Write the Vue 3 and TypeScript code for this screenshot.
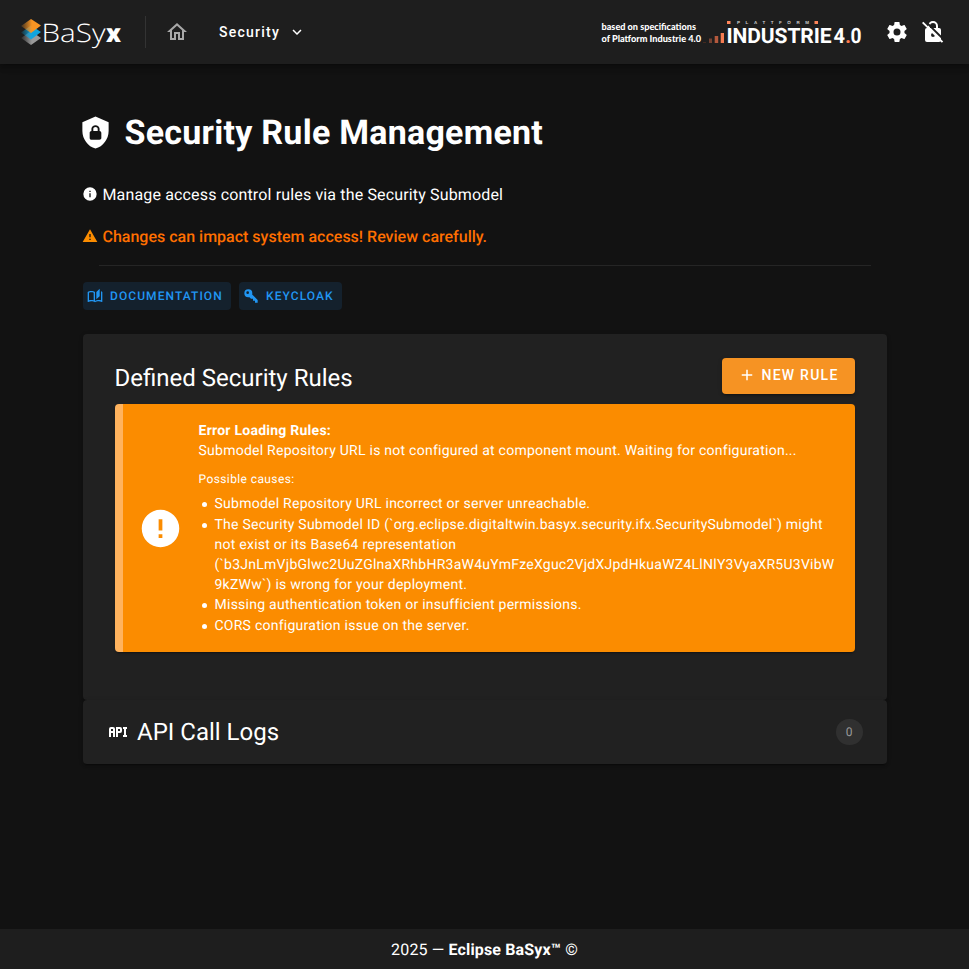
<script setup lang="ts">
interface Cause {
  text: string
}

const icons = {
  home: 'M12 5.69L17 10.19V18H15V12H9V18H7V10.19L12 5.69M12 3L2 12H5V20H11V14H13V20H19V12H22',
  chevron: 'M7.41,8.58L12,13.17L16.59,8.58L18,10L12,16L6,10L7.41,8.58Z',
  cog: 'M12,15.5A3.5,3.5 0 0,1 8.5,12A3.5,3.5 0 0,1 12,8.5A3.5,3.5 0 0,1 15.5,12A3.5,3.5 0 0,1 12,15.5M19.43,12.97C19.47,12.65 19.5,12.33 19.5,12C19.5,11.67 19.47,11.34 19.43,11L21.54,9.37C21.73,9.22 21.78,8.95 21.66,8.73L19.66,5.27C19.54,5.05 19.27,4.96 19.05,5.05L16.56,6.05C16.04,5.66 15.5,5.32 14.87,5.07L14.5,2.42C14.46,2.18 14.25,2 14,2H10C9.75,2 9.54,2.18 9.5,2.42L9.13,5.07C8.5,5.32 7.96,5.66 7.44,6.05L4.95,5.05C4.73,4.96 4.46,5.05 4.34,5.27L2.34,8.73C2.21,8.95 2.27,9.22 2.46,9.37L4.57,11C4.53,11.34 4.5,11.67 4.5,12C4.5,12.33 4.53,12.65 4.57,12.97L2.46,14.63C2.27,14.78 2.21,15.05 2.34,15.27L4.34,18.73C4.46,18.95 4.73,19.03 4.95,18.95L7.44,17.94C7.96,18.34 8.5,18.68 9.13,18.93L9.5,21.58C9.54,21.82 9.75,22 10,22H14C14.25,22 14.46,21.82 14.5,21.58L14.87,18.93C15.5,18.67 16.04,18.34 16.56,17.94L19.05,18.95C19.27,19.03 19.54,18.95 19.66,18.73L21.66,15.27C21.78,15.05 21.73,14.78 21.54,14.63L19.43,12.97Z',
  shield: 'M12,1L3,5V11C3,16.55 6.84,21.74 12,23C17.16,21.74 21,16.55 21,11V5L12,1M12,7C13.4,7 14.8,8.1 14.8,9.5V11C15.4,11 16,11.6 16,12.3V15.8C16,16.4 15.4,17 14.7,17H9.2C8.6,17 8,16.4 8,15.7V12.2C8,11.6 8.6,11 9.2,11V9.5C9.2,8.1 10.6,7 12,7M12,8.2C11.2,8.2 10.5,8.7 10.5,9.5V11H13.5V9.5C13.5,8.7 12.8,8.2 12,8.2Z',
  info: 'M13,9H11V7H13M13,17H11V11H13M12,2A10,10 0 0,0 2,12A10,10 0 0,0 12,22A10,10 0 0,0 22,12A10,10 0 0,0 12,2Z',
  alert: 'M13 14H11V9H13M13 18H11V16H13M1 21H23L12 2L1 21Z',
  book: 'M19 1L14 6V17L19 12.5V1M21 5V18.5C19.9 18.15 18.7 18 17.5 18C15.8 18 13.35 18.65 12 19.5V6C10.55 4.9 8.45 4.5 6.5 4.5C4.55 4.5 2.45 4.9 1 6V20.65C1 20.9 1.25 21.15 1.5 21.15C1.6 21.15 1.65 21.1 1.75 21.1C3.1 20.45 5.05 20 6.5 20C8.45 20 10.55 20.4 12 21.5C13.35 20.65 15.8 20 17.5 20C19.15 20 20.85 20.3 22.25 21.05C22.35 21.1 22.4 21.1 22.5 21.1C22.75 21.1 23 20.85 23 20.6V6C22.4 5.55 21.75 5.25 21 5M10 18.41C8.75 18.09 7.5 18 6.5 18C5.44 18 4.18 18.19 3 18.5V7.13C3.91 6.73 5.14 6.5 6.5 6.5C7.86 6.5 9.09 6.73 10 7.13V18.41Z',
  key: 'M22,18V22H18V19H15V16H12L9.74,13.74C9.19,13.91 8.61,14 8,14A6,6 0 0,1 2,8A6,6 0 0,1 8,2A6,6 0 0,1 14,8C14,8.61 13.91,9.19 13.74,9.74L22,18M7,5A2,2 0 0,0 5,7A2,2 0 0,0 7,9A2,2 0 0,0 9,7A2,2 0 0,0 7,5Z',
  plus: 'M19,13H13V19H11V13H5V11H11V5H13V11H19V13Z',
  alertCircle: 'M13,13H11V7H13M13,17H11V15H13M12,2A10,10 0 0,0 2,12A10,10 0 0,0 12,22A10,10 0 0,0 22,12A10,10 0 0,0 12,2Z',
  api: 'M7 7H5A2 2 0 0 0 3 9V17H5V13H7V17H9V9A2 2 0 0 0 7 7M7 11H5V9H7M14 7H10V17H12V13H14A2 2 0 0 0 16 11V9A2 2 0 0 0 14 7M14 11H12V9H14M20 9V15H21V17H17V15H18V9H17V7H21V9Z',
}

const causes: Cause[] = [
  { text: 'Submodel Repository URL incorrect or server unreachable.' },
  {
    text: 'The Security Submodel ID (`org.eclipse.digitaltwin.basyx.security.ifx.SecuritySubmodel`) might not exist or its Base64 representation (`b3JnLmVjbGlwc2UuZGlnaXRhbHR3aW4uYmFzeXguc2VjdXJpdHkuaWZ4LlNlY3VyaXR5U3VibW9kZWw`) is wrong for your deployment.',
  },
  { text: 'Missing authentication token or insufficient permissions.' },
  { text: 'CORS configuration issue on the server.' },
]
const logCount: number = 0
</script>

<template>
  <div class="app">
    <header class="bar">
      <svg class="logo" width="104" height="48" viewBox="0 0 104 48">
        <defs>
          <linearGradient id="lo" x1="0" x2="1"><stop offset="0" stop-color="#f79423" stop-opacity=".15" /><stop offset=".55" stop-color="#f79423" /></linearGradient>
          <linearGradient id="lb" x1="0" x2="1"><stop offset="0" stop-color="#10a5df" stop-opacity=".1" /><stop offset=".55" stop-color="#10a5df" /></linearGradient>
          <linearGradient id="lg" x1="0" x2="1"><stop offset="0" stop-color="#9a9a9a" stop-opacity=".1" /><stop offset=".55" stop-color="#9a9a9a" /></linearGradient>
        </defs>
        <path d="M0 30L10 23L20 30L10 37Z" fill="url(#lg)" />
        <path d="M0 24.500L10 17.500L20 24L10 31.500Z" fill="url(#lb)" />
        <path d="M0 18L10 11L20 17.500L10 25Z" fill="url(#lo)" />
        <text class="logo-thin" x="20.500" y="33.500" textLength="64" lengthAdjust="spacingAndGlyphs">BaSy</text>
        <text class="logo-bold" x="85" y="33.500" textLength="15" lengthAdjust="spacingAndGlyphs">x</text>
      </svg>
      <span class="bar-line"></span>
      <svg class="home" width="24" height="24" viewBox="0 0 24 24"><path :d="icons.home" /></svg>
      <button class="menu">Security<svg width="18" height="18" viewBox="0 0 24 24"><path :d="icons.chevron" /></svg></button>
      <div class="grow"></div>
      <svg class="platform" width="264" height="34" viewBox="0 0 264 34">
        <text class="spec" x="1.500" y="15" textLength="94.500" lengthAdjust="spacingAndGlyphs">based on specifications</text>
        <text class="spec" x="1.500" y="26.500" textLength="99.500" lengthAdjust="spacingAndGlyphs">of Platform Industrie 4.0</text>
        <rect x="103" y="27" width="3" height="1" fill="#44291f" />
        <rect x="109" y="23.500" width="3" height="4.500" fill="#754131" />
        <rect x="114.700" y="21" width="3.500" height="7" fill="#b4593d" />
        <rect x="120.700" y="18" width="3.300" height="10" fill="#f47c52" />
        <rect x="127" y="6" width="3.500" height="3" fill="#ff855a" />
        <text class="tiny" x="137" y="9" textLength="72" lengthAdjust="spacing">PLATTFORM</text>
        <rect x="214.500" y="6" width="3.500" height="3" fill="#ff855a" />
        <text class="industrie" x="126.500" y="28" textLength="105" lengthAdjust="spacing">INDUSTRIE</text>
        <text class="industrie" x="233.500" y="28" textLength="11.500" lengthAdjust="spacingAndGlyphs">4</text>
        <text class="industrie dot" x="245" y="28">.</text>
        <text class="industrie" x="250.500" y="28" textLength="11" lengthAdjust="spacingAndGlyphs">0</text>
      </svg>
      <svg class="cog" width="24" height="24" viewBox="0 0 24 24"><path :d="icons.cog" /></svg>
      <svg class="unlock" width="24" height="24" viewBox="0 0 24 24">
        <path fill-rule="evenodd" d="M6 8H15V6A3 3 0 0 0 9 6V8H7V6A5 5 0 0 1 17 6V8H18A2 2 0 0 1 20 10V20A2 2 0 0 1 18 22H6A2 2 0 0 1 4 20V10A2 2 0 0 1 6 8ZM12 13A2 2 0 1 0 12 17A2 2 0 1 0 12 13Z" />
        <path d="M3.600 .5L23.500 20.400" class="slash-gap" />
        <path d="M1.700 2.400L21.500 22.200" class="slash" />
      </svg>
    </header>

    <main>
      <h1><svg width="35" height="35" viewBox="0 0 24 24"><path :d="icons.shield" /></svg><span>Security Rule Management</span></h1>
      <p class="lead"><svg width="16" height="16" viewBox="0 0 24 24"><path :d="icons.info" /></svg>Manage access control rules via the Security Submodel</p>
      <p class="warning"><svg width="16" height="16" viewBox="0 0 24 24"><path :d="icons.alert" /></svg>Changes can impact system access! Review carefully.</p>
      <hr>
      <nav class="links">
        <a class="doc"><svg width="16" height="16" viewBox="0 0 24 24"><path :d="icons.book" /></svg>DOCUMENTATION</a>
        <a class="keycloak"><svg width="16" height="16" viewBox="0 0 24 24"><path :d="icons.key" /></svg>KEYCLOAK</a>
      </nav>

      <section class="card rules">
        <div class="card-head">
          <h2>Defined Security Rules</h2>
          <button class="new"><svg width="18" height="18" viewBox="0 0 24 24"><path :d="icons.plus" /></svg>NEW RULE</button>
        </div>
        <div class="alert">
          <svg class="alert-icon" width="45" height="45" viewBox="0 0 24 24"><path :d="icons.alertCircle" /></svg>
          <div class="alert-body">
            <strong>Error Loading Rules:</strong>
            <div>Submodel Repository URL is not configured at component mount. Waiting for configuration...</div>
            <div class="possible">Possible causes:</div>
            <ul>
              <li v-for="cause in causes" :key="cause.text">{{ cause.text }}</li>
            </ul>
          </div>
        </div>
      </section>

      <section class="card logs">
        <svg width="24" height="24" viewBox="0 0 24 24"><path :d="icons.api" /></svg>
        <h2>API Call Logs</h2>
        <span class="count">{{ logCount }}</span>
      </section>
    </main>

    <footer><span>2025 — <b>Eclipse BaSyx™</b> ©</span></footer>
  </div>
</template>

<style>
body {
  background: #121212;
}
</style>

<style scoped>
* {
  box-sizing: border-box;
}
.app {
  display: flex;
  flex-direction: column;
  height: 969px;
  overflow: hidden;
  background: #121212;
  color: #fff;
  font-family: Roboto, "Liberation Sans", sans-serif;
  line-height: 1.5;
  text-rendering: geometricPrecision;
}
svg {
  fill: currentColor;
  flex: none;
}
button {
  border: 0;
  color: inherit;
  font-family: inherit;
}
.bar {
  display: flex;
  align-items: center;
  flex: none;
  height: 64px;
  padding: 0 24px 0 21px;
  background: #1e1e1e;
  box-shadow: 0 2px 4px -1px rgba(0, 0, 0, 0.2), 0 4px 5px rgba(0, 0, 0, 0.14), 0 1px 10px rgba(0, 0, 0, 0.12);
}
.logo {
  overflow: visible;
}
.logo-thin {
  font: 300 25.500px "Open Sans", sans-serif;
}
.logo-bold {
  font: 800 25px "Open Sans", sans-serif;
}
.bar-line {
  width: 1px;
  height: 32px;
  margin: 0 19px 0 20px;
  background: #333;
}
.home {
  color: #a8a8a8;
}
.menu {
  display: flex;
  align-items: center;
  gap: 8px;
  margin-left: 30px;
  padding: 0;
  background: none;
  font-size: 14px;
  font-weight: 500;
  letter-spacing: 1.250px;
}
.grow {
  flex: 1;
}
.spec {
  font: 900 9.500px Lato, sans-serif;
}
.tiny {
  font: 700 4.500px "Liberation Sans", sans-serif;
  fill: #ccc;
}
.industrie {
  font: 700 21px Roboto, sans-serif;
}
.dot {
  fill: #ff7b4d;
}
.cog {
  margin-left: 21px;
}
.unlock {
  margin-left: 12px;
}
.slash,
.slash-gap {
  fill: none;
  stroke: #fff;
  stroke-width: 1.900;
}
.slash-gap {
  stroke: #1e1e1e;
}
main {
  width: 804px;
  margin: 0 auto;
  flex: 1;
}
h1 {
  display: flex;
  align-items: center;
  gap: 12px;
  height: 40px;
  margin: 48px 0 0 -5px;
  font-size: 34px;
  font-weight: 700;
  line-height: 40px;
  letter-spacing: 0.250px;
}
h1 span {
  padding-top: 2px;
}
p {
  display: flex;
  align-items: center;
  gap: 4.500px;
  margin: 0 0 0 -0.500px;
  height: 24px;
  font-size: 16px;
}
p svg {
  margin-bottom: 2px;
}
.lead {
  margin-top: 31px;
  letter-spacing: 0.150px;
}
.warning {
  margin-top: 18px;
  color: #ff6f00;
  font-weight: 500;
}
.warning svg {
  color: #fb8c00;
}
hr {
  height: 1px;
  margin: 16px 15.500px 16px 16.500px;
  border: 0;
  background: #252525;
}
.links {
  display: flex;
  gap: 8px;
}
.links a {
  display: flex;
  align-items: center;
  gap: 7px;
  height: 28px;
  padding-left: 4.500px;
  border-radius: 4px;
  background: #14212d;
  color: #2196f3;
  font-size: 12px;
  font-weight: 500;
  letter-spacing: 1.070px;
}
.doc {
  width: 148px;
}
.keycloak {
  width: 103px;
}
.card {
  border-radius: 4px;
  background: #212121;
  box-shadow: 0 3px 1px -2px rgba(0, 0, 0, 0.2), 0 2px 2px rgba(0, 0, 0, 0.14), 0 1px 5px rgba(0, 0, 0, 0.12);
}
.rules {
  height: 366px;
  margin-top: 24px;
  padding: 24px 32px;
}
.card-head {
  display: flex;
  justify-content: space-between;
  height: 46px;
}
h2 {
  margin: 0;
  font-size: 24px;
  font-weight: 400;
  line-height: 40px;
}
.new {
  display: flex;
  align-items: center;
  justify-content: center;
  gap: 5px;
  width: 133px;
  height: 36px;
  padding: 0 0 2px 1px;
  border-radius: 4px;
  background: #f69323;
  box-shadow: 0 3px 1px -2px rgba(0, 0, 0, 0.2), 0 2px 2px rgba(0, 0, 0, 0.14), 0 1px 5px rgba(0, 0, 0, 0.12);
  font-size: 14px;
  font-weight: 500;
  letter-spacing: 1.250px;
}
.alert {
  display: flex;
  align-items: center;
  height: 248px;
  padding: 0 16px 0 15.500px;
  border-left: 8px solid #ffb35e;
  border-radius: 4px;
  background: #fb8c00;
  box-shadow: 0 3px 1px -2px rgba(0, 0, 0, 0.2), 0 2px 2px rgba(0, 0, 0, 0.14);
}
.alert-body {
  flex: 1;
  margin-left: 15.500px;
  padding-top: 1px;
  font-size: 14px;
  line-height: 20px;
  letter-spacing: 0.250px;
}
.possible {
  margin-top: 8px;
  font-size: 12px;
  letter-spacing: 0.400px;
}
ul {
  margin: 5px 0 0;
  padding-left: 16px;
  list-style: none;
}
li {
  position: relative;
  overflow-wrap: anywhere;
}
li::before {
  content: "";
  position: absolute;
  left: -12.500px;
  top: 8px;
  width: 5px;
  height: 5px;
  border-radius: 50%;
  background: #fff;
}
li:nth-child(odd) {
  margin-bottom: 1px;
}
.logs {
  display: flex;
  align-items: center;
  height: 64px;
  padding: 0 24px 0 23px;
}
.logs svg {
  margin-bottom: 1px;
}
.logs h2 {
  flex: 1;
  margin-left: 7.500px;
}
.count {
  width: 27px;
  height: 26px;
  border-radius: 13px;
  background: #303030;
  color: #999;
  font-size: 12px;
  line-height: 26px;
  text-align: center;
}
footer {
  display: flex;
  align-items: center;
  justify-content: center;
  flex: none;
  height: 40px;
  padding-top: 1px;
  background: #1e1e1e;
  font-size: 16px;
  letter-spacing: 0.150px;
}
</style>
